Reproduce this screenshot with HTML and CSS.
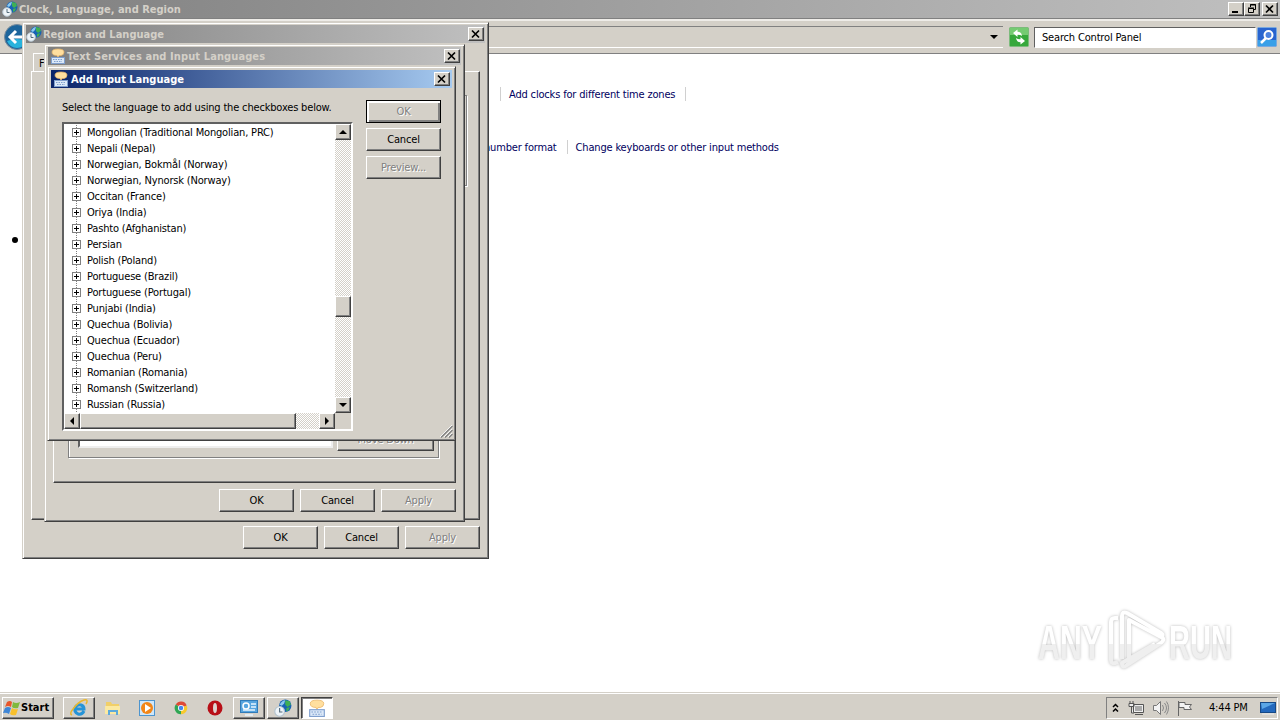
FILE: index.html
```
<!DOCTYPE html>
<html>
  <head>
    <meta charset="utf-8">
    <title>Clock, Language, and Region</title>
    <link rel="stylesheet" href="styles.css">
  </head>
  <body>
    <svg class="defs">
      <symbol id="globe" viewBox="0 0 16 16">
        <circle cx="10" cy="6" r="5.5" fill="#1763b5"/>
        <path d="M5 5q2-4 5-4l-1 3-2 2z" fill="#8cc8ee"/>
        <path d="M10 1l4 1 1 3-3 2-2-2zM11 8l3-1-1 3-2 1z" fill="#3faf54"/>
        <circle cx="5" cy="11" r="4.300" fill="#eef4f8" stroke="#b4c4cf"/>
        <path d="M5 8v3.500h2.500" fill="none" stroke="#536b7b"/>
      </symbol>
      <symbol id="keys" viewBox="0 0 16 16">
        <path d="M2 4q0-3 6-3t6 3-3 3.500l-2 0-1 2-1-2q-5 0-5-3.500z" fill="#ffdf9f" stroke="#eab566" stroke-width=".7"/>
        <rect x="1.500" y="9.500" width="13" height="6" fill="#dce9f8" stroke="#7f9fce"/>
        <path d="M3 11.500h10M4 13.500h8" stroke="#7f9fce" stroke-dasharray="1.500 1"/>
      </symbol>
      <symbol id="x" viewBox="0 0 12 10">
        <path d="M2 1.500l7 7M9 1.500l-7 7" stroke="#000" stroke-width="1.700"/>
      </symbol>
    </svg>

    <div class="explorer">
      <div class="title">
        <svg class="ico"><use href="#globe"/></svg>
        <span>Clock, Language, and Region</span>
        <div class="controls">
          <button class="cap"><svg width="12" height="10"><path d="M2 8h6" stroke="#000" stroke-width="2"/></svg></button>
          <button class="cap"><svg width="12" height="10"><path d="M4.500 3V.500h5v5H8M4 1h6M2.500 4.500h5v4h-5zM2 4h6" fill="none" stroke="#000"/></svg></button>
          <button class="cap gap"><svg width="12" height="10"><use href="#x"/></svg></button>
        </div>
      </div>
      <div class="toolbar">
        <svg class="back" width="26" height="26" viewBox="0 0 26 26">
          <circle cx="13" cy="13" r="12.500" fill="#1d659c" stroke="#788b9b"/>
          <path d="M3 17q10-4 20 0-3 7-10 7T3 17" fill="#29b3dc"/>
          <path d="M12 7l-6 6 6 6M7 13h13" fill="none" stroke="#fff" stroke-width="3"/>
        </svg>
        <div class="address"><i class="down"></i></div>
        <svg width="20" height="20" viewBox="0 0 20 20">
          <rect x=".5" y=".5" width="19" height="19" rx="1" fill="#37a83c" stroke="#7cbb7c"/>
          <path d="M1 1h18v7H1z" fill="#75cb72"/>
          <path d="M6 4L2.500 8.500h2.300q0 4 4.200 4.500-1.500-2-1.300-4.500H10zM14 16l3.500-4.500h-2.300q0-4-4.200-4.500 1.500 2 1.300 4.500H10z" transform="matrix(-1 0 0 1 20 0) rotate(90 10 10)" fill="#fff"/>
        </svg>
        <div class="search">Search Control Panel</div>
        <svg width="20" height="20" viewBox="0 0 20 20">
          <rect x=".5" y=".5" width="19" height="19" rx="1" fill="#2864cf" stroke="#79a9df"/>
          <path d="M1 13h18v6H1z" fill="#39a0e8"/>
          <path d="M9 11l-5 5" stroke="#fff" stroke-width="2.500"/>
          <circle cx="11.500" cy="8" r="4" fill="#4c82e0" stroke="#fff" stroke-width="2"/>
        </svg>
      </div>
      <div class="content">
        <div class="links first"><a>Add clocks for different time zones</a></div>
        <div class="links second"><a>number format</a><a>Change keyboards or other input methods</a></div>
        <i class="bullet"></i>
      </div>
    </div>

    <div class="win region">
      <div class="title">
        <svg class="ico"><use href="#globe"/></svg>
        <span>Region and Language</span>
        <div class="controls"><button class="cap"><svg width="12" height="10"><use href="#x"/></svg></button></div>
      </div>
      <div class="tab">F</div>
      <div class="page"><div class="group"></div></div>
      <div class="buttons">
        <button>OK</button><button>Cancel</button><button disabled>Apply</button>
      </div>
    </div>

    <div class="win services">
      <div class="title">
        <svg class="ico"><use href="#keys"/></svg>
        <span>Text Services and Input Languages</span>
        <div class="controls"><button class="cap"><svg width="12" height="10"><use href="#x"/></svg></button></div>
      </div>
      <div class="page">
        <div class="group">
          <div class="edit"></div>
          <button class="move" disabled>Move Down</button>
        </div>
      </div>
      <div class="buttons">
        <button>OK</button><button>Cancel</button><button disabled>Apply</button>
      </div>
    </div>

    <div class="win add">
      <div class="title active">
        <svg class="ico"><use href="#keys"/></svg>
        <span>Add Input Language</span>
        <div class="controls"><button class="cap"><svg width="12" height="10"><use href="#x"/></svg></button></div>
      </div>
      <div class="body">
        <div class="left">
          <p>Select the language to add using the checkboxes below.</p>
          <div class="list">
            <ul>
              <li>Mongolian (Traditional Mongolian, PRC)</li>
              <li>Nepali (Nepal)</li>
              <li>Norwegian, Bokmål (Norway)</li>
              <li>Norwegian, Nynorsk (Norway)</li>
              <li>Occitan (France)</li>
              <li>Oriya (India)</li>
              <li>Pashto (Afghanistan)</li>
              <li>Persian</li>
              <li>Polish (Poland)</li>
              <li>Portuguese (Brazil)</li>
              <li>Portuguese (Portugal)</li>
              <li>Punjabi (India)</li>
              <li>Quechua (Bolivia)</li>
              <li>Quechua (Ecuador)</li>
              <li>Quechua (Peru)</li>
              <li>Romanian (Romania)</li>
              <li>Romansh (Switzerland)</li>
              <li>Russian (Russia)</li>
            </ul>
            <div class="vscroll">
              <b class="raised"><i class="up"></i></b>
              <b class="raised vthumb"></b>
              <b class="raised"><i class="down"></i></b>
            </div>
            <div class="hscroll">
              <b class="raised"><i class="prev"></i></b>
              <b class="raised hthumb"></b>
              <b class="raised"><i class="next"></i></b>
            </div>
          </div>
        </div>
        <div class="side">
          <button class="default" disabled>OK</button>
          <button>Cancel</button>
          <button disabled>Preview...</button>
        </div>
      </div>
      <svg class="grip" width="13" height="13" viewBox="0 0 13 13">
        <path d="M0 12L12 0M4 12l8-8M8 12l4-4" stroke="#fff"/>
        <path d="M1 12.500L12.500 1M5 12.500L12.500 5M9 12.500L12.500 9" stroke="#808080" stroke-width="1.300"/>
      </svg>
    </div>

    <svg class="watermark" width="210" height="70" viewBox="0 0 210 70">
      <linearGradient id="fade" x1="0" y1="0" x2="0" y2="70" gradientUnits="userSpaceOnUse">
        <stop offset=".55" stop-color="#fff"/><stop offset=".56" stop-color="#efefef"/>
      </linearGradient>
      <text x="8" y="54" textLength="64" lengthAdjust="spacingAndGlyphs">ANY</text>
      <text x="139" y="54" textLength="63" lengthAdjust="spacingAndGlyphs">RUN</text>
      <path d="M88 13h-3q-4 0-4 4v38q0 4 4 3l3-1M92 54V11q0-5 5-3l34 20q3 2 0 4L99 15v39M132 32q3 3-1 6L97 60q-5 4-5-2l33-19"/>
    </svg>

    <div class="taskbar">
      <button class="start">
        <svg width="18" height="18" viewBox="0 0 18 18">
          <path d="M4 3q3-2 5 0L8 8Q5 6 2 8z" fill="#e8562a"/>
          <path d="M10 3q3 2 7 0l-2 6q-4 1-6-1z" fill="#7fb93c"/>
          <path d="M2 9q3-2 6 0l-2 6q-3-2-6-1z" fill="#3f86d6"/>
          <path d="M9 9q3 2 6 1l-2 6q-4 1-6-1z" fill="#f8c02c"/>
        </svg>Start
      </button>
      <div class="task boxed"><svg width="20" height="20" viewBox="0 0 20 20">
        <path d="M15 13q-2 4-6 3-4-2-3-6 2-4 6-3 3 1 3 4H7" fill="none" stroke="#2694d8" stroke-width="3"/>
        <path d="M3 17q-3-1 1-6 5-7 11-9 5-1 2 4" fill="none" stroke="#eab72e" stroke-width="1.500"/>
      </svg></div>
      <div class="task"><svg width="18" height="18" viewBox="0 0 18 18">
        <path d="M2 3h5l1 2h7v10H2z" fill="#f1cf68"/>
        <path d="M1 7h15v8H1z" fill="#fbe9a1"/>
        <path d="M4 16v-5h10v5h-2v-3H6v3z" fill="#5daadb"/>
      </svg></div>
      <div class="task"><svg width="18" height="18" viewBox="0 0 18 18">
        <rect x="1.500" y="1.500" width="15" height="15" fill="#cfe7fa" stroke="#4d95cf"/>
        <circle cx="9" cy="9" r="6" fill="#f28618"/><path d="M7 5l6 4-6 4z" fill="#fff"/>
      </svg></div>
      <div class="task"><svg width="14" height="14" viewBox="0 0 16 16">
        <path d="M8 8L2 4a7 7 0 0 1 12.500 1z" fill="#de4a37"/>
        <path d="M8 8l6.500-3A7 7 0 0 1 8 15z" fill="#f7c92d"/>
        <path d="M8 8v7A7 7 0 0 1 2 4z" fill="#2fa653"/>
        <circle cx="8" cy="8" r="3.500" fill="#fff"/><circle cx="8" cy="8" r="2.600" fill="#4587ed"/>
      </svg></div>
      <div class="task"><svg width="16" height="16" viewBox="0 0 16 16">
        <circle cx="8" cy="8" r="7.500" fill="#b80f17"/><ellipse cx="8" cy="8" rx="2" ry="5" fill="#ddd4d0"/>
      </svg></div>
      <div class="task boxed"><svg width="18" height="18" viewBox="0 0 18 18">
        <rect x=".5" y="1.500" width="17" height="12" fill="#57a5df" stroke="#317bb8"/>
        <circle cx="6" cy="7" r="3" fill="none" stroke="#fff" stroke-width="1.500"/>
        <path d="M11 5h5M11 8h5M3 11h12M5 16h8" stroke="#e7f5ff" stroke-width="1.500"/>
      </svg></div>
      <div class="task boxed"><svg width="18" height="18"><use href="#globe"/></svg></div>
      <div class="task boxed pressed"><svg width="18" height="18"><use href="#keys"/></svg></div>
      <div class="tray">
        <svg width="8" height="10" viewBox="0 0 8 10"><path d="M1 4l2.500-2.500L6 4M1 8.500L3.500 6 6 8.500" fill="none" stroke="#000" stroke-width="1.500"/></svg>
        <svg width="16" height="16" viewBox="0 0 16 16"><path d="M5.500 4.500h10v8h-10zM7 14.500h8M1 3.500h5v3H1zM2 1v2M5 1v2M3.500 7v6H6" fill="#eee" stroke="#555"/><path d="M7 6h7v5H7z" fill="#aaa"/></svg>
        <svg width="17" height="16" viewBox="0 0 17 16"><path d="M1.500 5.500h3l4-4v13l-4-4h-3z" fill="#f3f3f3" stroke="#777"/><path d="M10.500 5q2 3 0 6M12.500 3q4 5 0 10M14.500 1.500q4 6 0 13" fill="none" stroke="#888"/></svg>
        <svg width="16" height="16" viewBox="0 0 16 16"><path d="M1.500 1v15M2 2.500h6v2h6.500l-2 2.500 2 2.500H7v-2H2z" fill="#f3f3f3" stroke="#666"/></svg>
        <span>4:44 PM</span>
        <svg width="16" height="14" viewBox="0 0 16 14"><rect x=".5" y="1.500" width="15" height="10" fill="#2469bd" stroke="#174986"/><path d="M1 2h14L2 8z" fill="#5ba6e6"/><path d="M2 13h12" stroke="#eee"/></svg>
      </div>
    </div>
  </body>
</html>
```
FILE: styles.css
```
* { box-sizing: border-box; padding: 0; margin: 0; }

body {
  height: 720px;
  overflow: hidden;
  position: relative;
  background: white;
  color: black;
  font: 11px/13px "DejaVu Sans Condensed", "DejaVu Sans", sans-serif;
  font-stretch: condensed;
  letter-spacing: -0.17px;
}

svg { display: block; flex: none; }
.defs { position: absolute; width: 0; height: 0; }
.ico { width: 16px; height: 16px; }

button {
  width: 75px;
  height: 23px;
  font: inherit;
  letter-spacing: inherit;
  color: black;
}

button, .raised, .boxed {
  background: #d4d0c8;
  border: 1px solid;
  border-color: white #404040 #404040 white;
  box-shadow: inset -1px -1px #808080;
}

button:disabled { color: #808080; text-shadow: 1px 1px white; }

/* title bars */
.title {
  height: 18px;
  display: flex;
  align-items: center;
  padding: 0 2px;
  background: linear-gradient(to right, #808080, #c0c0c0);
  color: #d4d0c8;
  font-weight: bold;
  letter-spacing: 0;
}

.title span { margin-left: 1px; }
.title.active { background: linear-gradient(to right, #0a246a, #a6caf0); color: white; }
.controls { display: flex; margin-left: auto; }

.cap {
  width: 16px;
  height: 14px;
  display: flex;
  align-items: center;
  justify-content: center;
}

.cap.gap { margin-left: 2px; }

/* control panel */
.toolbar {
  height: 36px;
  display: flex;
  align-items: center;
  gap: 6px;
  padding: 2px 3px 0 4px;
  background: #d4d0c8;
  border-top: 1px solid #808080;
  border-bottom: 1px solid #808080;
  box-shadow: inset 0 2px #eeece8;
}

.address {
  flex: 1;
  height: 22px;
  display: flex;
  align-items: center;
  justify-content: flex-end;
  padding-right: 5px;
  border-top: 1px solid #808080;
  border-bottom: 1px solid white;
}

.search {
  width: 222px;
  height: 21px;
  margin: 0 -5px 0 -1px;
  padding: 3px 7px;
  background: white;
  border: 1px solid;
  border-color: #606060 white white #606060;
}

.content { height: 638px; padding-top: 33px; }

.links { display: flex; height: 14px; line-height: 15px; }
.links a { color: #000060; padding: 0 10px 0 8px; border-right: 1px solid #d0d0d0; }
.first { margin-left: 500px; border-left: 1px solid #d0d0d0; }
.second { margin: 39px 0 0 476px; }
.second a:last-child { border: 0; }
.bullet { display: block; width: 6px; height: 6px; margin: 83px 0 0 12px; border-radius: 3px; background: black; }

/* dialogs */
.win {
  position: absolute;
  padding: 3px;
  background: #d4d0c8;
  border: 1px solid;
  border-color: #d4d0c8 #404040 #404040 #d4d0c8;
  box-shadow: inset 1px 1px white, inset -1px -1px #808080;
}

.page {
  border: 1px solid;
  border-color: white #404040 #404040 white;
  box-shadow: inset -1px -1px #808080;
}

.buttons { display: flex; justify-content: flex-end; gap: 6px; }

.region { left: 22px; top: 22px; width: 467px; height: 537px; padding-top: 2px; }
.region .title { padding: 0 1px 0 0; }
.region .tab { width: 60px; height: 18px; margin: 10px 0 0 7px; padding: 3px 5px; border: solid white; border-width: 1px 0 0 1px; }
.region .page { height: 449px; margin: 0 5px; padding: 23px 12px; }
.region .group { height: 91px; border: 1px solid #808080; box-shadow: 1px 1px white; }
.region .buttons { margin: 6px 5px 0; }

.services { left: 44px; top: 44px; width: 421px; height: 478px; padding-top: 2px; }
.services .title { padding-right: 1px; letter-spacing: 0.1px; }
.services .page { height: 403px; margin: 15px 5px 0; padding: 24px 16px 24px 14px; display: flex; }
.services .group {
  flex: 1;
  display: flex;
  align-items: flex-end;
  justify-content: space-between;
  padding: 0 4px 6px 9px;
  border: 1px solid #808080;
  box-shadow: 1px 1px white, inset 1px 1px white;
}
.services .edit { width: 255px; height: 60px; margin-bottom: 3px; background: white; border: 2px solid; border-color: #606060 #eee #eee #606060; }
.services .move { width: 97px; }
.services .buttons { margin: 6px 5px 0; }

.add { left: 47px; top: 66px; width: 409px; height: 375px; }
.add .title span { margin-left: 2px; }
.body { display: flex; gap: 13px; padding: 12px 0 0 11px; }
.left { width: 291px; }
.left p { height: 22px; padding-top: 1px; white-space: nowrap; }
.side { display: flex; flex-direction: column; gap: 5px; }
.side .default { outline: 1px solid black; outline-offset: -1px; box-shadow: inset 2px 2px white, inset -2px -2px #808080; }

.list {
  height: 309px;
  display: grid;
  grid-template: 289px 16px / 271px 16px;
  background: #d4d0c8;
  border: 2px solid;
  border-color: #606060 white white #606060;
}

ul {
  list-style: none;
  background: linear-gradient(white 1px, transparent 1px) 12px 0 / 1px 2px repeat-y, linear-gradient(#808080, #808080) 12px 0 / 1px 100% no-repeat, white;
}

li { height: 16px; display: flex; align-items: center; padding-left: 8px; }

/* expander box */
li::before {
  content: "";
  box-sizing: border-box;
  width: 9px;
  height: 9px;
  margin-right: 6px;
  border: 1px solid #808080;
  background: linear-gradient(black, black) center / 5px 1px no-repeat, linear-gradient(black, black) center / 1px 5px no-repeat, white;
  box-shadow: 1px 0 white;
}

.vscroll, .hscroll {
  display: flex;
  background: repeating-conic-gradient(#fff 0 25%, #d4d0c8 0 50%) 0 0 / 2px 2px;
}

.vscroll { flex-direction: column; }
.raised { width: 16px; height: 16px; display: flex; align-items: center; justify-content: center; flex: none; }
.vthumb { height: 21px; margin: 156px 0 auto; }
.hthumb { width: 216px; margin-right: auto; }

.up, .down { border: 4px solid transparent; border-top: 0; border-bottom: 4px solid black; }
.down { border-bottom: 0; border-top: 4px solid black; }
.prev, .next { border: 4px solid transparent; border-left: 0; border-right: 4px solid black; }
.next { border-right: 0; border-left: 4px solid black; }

.grip { position: absolute; right: 2px; bottom: 2px; }

.watermark {
  position: absolute;
  left: 1030px;
  top: 605px;
  fill: url(#fade);
  font: bold 49px "Liberation Sans", sans-serif;
  letter-spacing: 0;
  filter: drop-shadow(0 0 1.5px #bbb);
}

.watermark path { fill: none; stroke: url(#fade); stroke-width: 4px; stroke-linejoin: round; }

/* taskbar */
.taskbar {
  position: absolute;
  left: 0;
  right: 0;
  bottom: 0;
  height: 28px;
  display: flex;
  align-items: center;
  padding: 2px 2px 0;
  background: #d4d0c8;
  border-top: 1px solid #d4d0c8;
  box-shadow: inset 0 1px white;
}

.start { width: 52px; height: 22px; margin-right: 8px; display: flex; align-items: center; font-weight: bold; letter-spacing: 0; }
.task { width: 34px; height: 22px; display: flex; align-items: center; justify-content: center; }
.boxed { width: 32px; margin: 0 1px; }
.pressed { background: white; border-color: #404040 white white #404040; box-shadow: inset 1px 1px #808080; }

.tray {
  width: 172px;
  height: 22px;
  margin-left: auto;
  display: flex;
  align-items: center;
  gap: 8px;
  padding-left: 5px;
  border: 1px solid;
  border-color: #808080 white white #808080;
}

.tray span { margin: 0 4px 0 8px; white-space: nowrap; }
```
